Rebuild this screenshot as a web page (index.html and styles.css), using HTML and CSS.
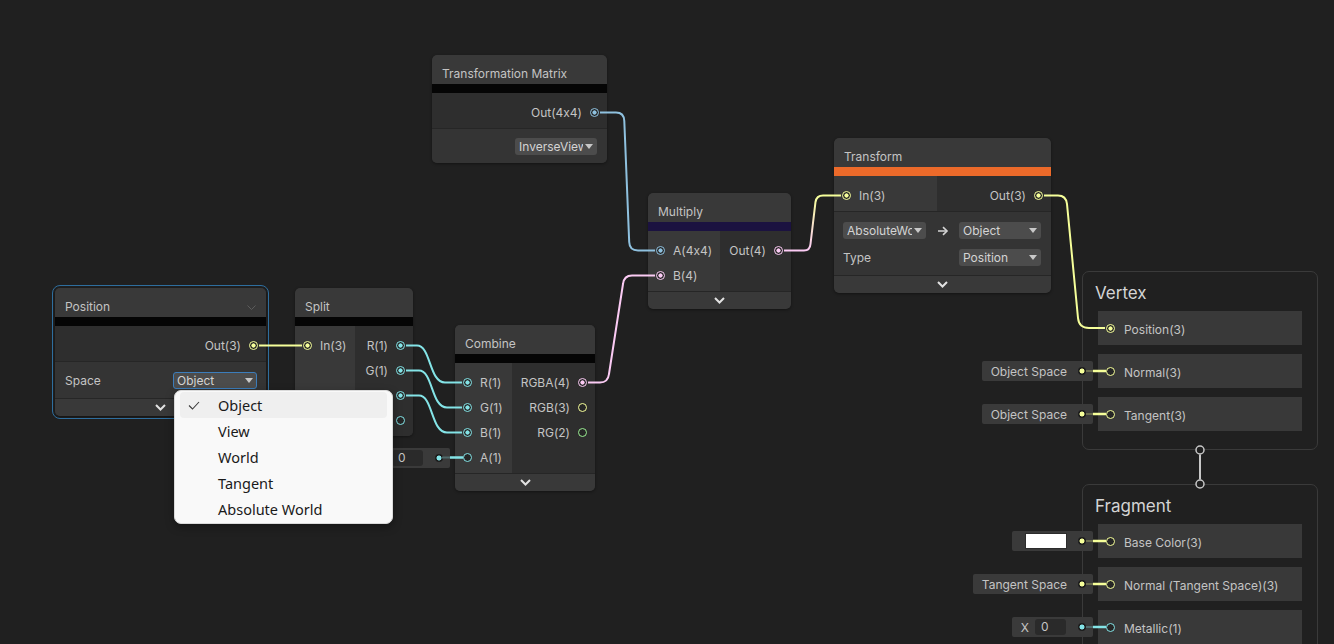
FILE: index.html
```html
<!DOCTYPE html>
<html lang="en">
<head>
  <meta charset="UTF-8">
  <meta name="viewport" content="width=device-width, initial-scale=1.0">
  <title>Shader Graph</title>
  <link rel="stylesheet" href="styles.css">
</head>
<body>
  <div class="graph">

    <!-- Transformation Matrix -->
    <div class="node n-matrix">
      <div class="node-title">Transformation Matrix</div>
      <div class="node-bar"></div>
      <div class="node-ports">
        <div class="ports-out">
          <div class="port out"><span>Out(4x4)</span><i class="dot mat on"></i></div>
        </div>
      </div>
      <div class="node-controls ctl-end">
        <div class="select sel-matrix"><span>InverseView</span></div>
      </div>
    </div>

    <!-- Multiply -->
    <div class="node n-multiply">
      <div class="node-title">Multiply</div>
      <div class="node-bar bar-purple"></div>
      <div class="node-ports">
        <div class="ports-in">
          <div class="port"><i class="dot mat on"></i><span>A(4x4)</span></div>
          <div class="port"><i class="dot v4 on"></i><span>B(4)</span></div>
        </div>
        <div class="ports-out">
          <div class="port out"><span>Out(4)</span><i class="dot v4 on"></i></div>
        </div>
      </div>
      <div class="node-collapse">
        <svg width="11" height="7" viewBox="0 0 11 7"><polyline points="1,1 5.5,5.5 10,1" fill="none" stroke="#e2e2e2" stroke-width="2"/></svg>
      </div>
    </div>

    <!-- Transform -->
    <div class="node n-transform">
      <div class="node-title">Transform</div>
      <div class="node-bar bar-orange"></div>
      <div class="node-ports">
        <div class="ports-in">
          <div class="port"><i class="dot v3 on"></i><span>In(3)</span></div>
        </div>
        <div class="ports-out">
          <div class="port out"><span>Out(3)</span><i class="dot v3 on"></i></div>
        </div>
      </div>
      <div class="node-controls ctl-grid">
        <div class="select"><span>AbsoluteWorld</span></div>
        <svg class="arrow" width="12" height="10" viewBox="0 0 12 10">
          <line x1="1" y1="5" x2="10" y2="5" stroke="#d4d4d4" stroke-width="1.6"/>
          <polyline points="6,1.2 10,5 6,8.8" fill="none" stroke="#d4d4d4" stroke-width="1.6"/>
        </svg>
        <div class="select"><span>Object</span></div>
        <span class="ctl-label">Type</span>
        <span></span>
        <div class="select"><span>Position</span></div>
      </div>
      <div class="node-collapse">
        <svg width="11" height="7" viewBox="0 0 11 7"><polyline points="1,1 5.5,5.5 10,1" fill="none" stroke="#e2e2e2" stroke-width="2"/></svg>
      </div>
    </div>

    <!-- Position -->
    <div class="node n-position selected">
      <div class="node-title">Position
        <svg width="9" height="5" viewBox="0 0 9 5"><polyline points="0.5,0.5 4.5,4.5 8.5,0.5" fill="none" stroke="#5c5c5c" stroke-width="1"/></svg>
      </div>
      <div class="node-bar"></div>
      <div class="node-ports">
        <div class="ports-out">
          <div class="port out"><span>Out(3)</span><i class="dot v3 on"></i></div>
        </div>
      </div>
      <div class="node-controls ctl-row">
        <span class="ctl-label">Space</span>
        <div class="select focus sel-space"><span>Object</span></div>
      </div>
      <div class="node-collapse">
        <svg width="11" height="7" viewBox="0 0 11 7"><polyline points="1,1 5.5,5.5 10,1" fill="none" stroke="#e2e2e2" stroke-width="2"/></svg>
      </div>
    </div>

    <!-- Split -->
    <div class="node n-split">
      <div class="node-title">Split</div>
      <div class="node-bar"></div>
      <div class="node-ports">
        <div class="ports-in">
          <div class="port"><i class="dot v3 on"></i><span>In(3)</span></div>
        </div>
        <div class="ports-out">
          <div class="port out"><span>R(1)</span><i class="dot v1 on"></i></div>
          <div class="port out"><span>G(1)</span><i class="dot v1 on"></i></div>
          <div class="port out"><span>B(1)</span><i class="dot v1 on"></i></div>
          <div class="port out"><span>A(1)</span><i class="dot v1"></i></div>
        </div>
      </div>
    </div>

    <!-- Combine -->
    <div class="node n-combine">
      <div class="node-title">Combine</div>
      <div class="node-bar"></div>
      <div class="node-ports">
        <div class="ports-in">
          <div class="port"><i class="dot v1 on"></i><span>R(1)</span></div>
          <div class="port"><i class="dot v1 on"></i><span>G(1)</span></div>
          <div class="port"><i class="dot v1 on"></i><span>B(1)</span></div>
          <div class="port">
            <div class="inline"><span class="inline-x">X</span><span class="field">0</span><i class="idot v1"></i></div>
            <i class="dot v1"></i><span>A(1)</span>
          </div>
        </div>
        <div class="ports-out">
          <div class="port out"><span>RGBA(4)</span><i class="dot v4 on"></i></div>
          <div class="port out"><span>RGB(3)</span><i class="dot v3"></i></div>
          <div class="port out"><span>RG(2)</span><i class="dot v2"></i></div>
        </div>
      </div>
      <div class="node-collapse">
        <svg width="11" height="7" viewBox="0 0 11 7"><polyline points="1,1 5.5,5.5 10,1" fill="none" stroke="#e2e2e2" stroke-width="2"/></svg>
      </div>
    </div>

    <!-- Vertex block -->
    <div class="block blk-vertex">
      <div class="block-title">Vertex</div>
      <div class="block-rows">
        <div class="slot"><i class="dot v3 on"></i><span>Position(3)</span></div>
        <div class="slot">
          <div class="inline"><span>Object Space</span><i class="idot v3"></i></div>
          <i class="dot v3"></i><span>Normal(3)</span>
        </div>
        <div class="slot">
          <div class="inline"><span>Object Space</span><i class="idot v3"></i></div>
          <i class="dot v3"></i><span>Tangent(3)</span>
        </div>
      </div>
    </div>

    <!-- Fragment block -->
    <div class="block blk-fragment">
      <div class="block-title">Fragment</div>
      <div class="block-rows">
        <div class="slot">
          <div class="inline inline-color"><span class="swatch"></span><i class="idot v3"></i></div>
          <i class="dot v3"></i><span>Base Color(3)</span>
        </div>
        <div class="slot">
          <div class="inline"><span>Tangent Space</span><i class="idot v3"></i></div>
          <i class="dot v3"></i><span>Normal (Tangent Space)(3)</span>
        </div>
        <div class="slot">
          <div class="inline"><span class="inline-x">X</span><span class="field">0</span><i class="idot v1"></i></div>
          <i class="dot v1"></i><span>Metallic(1)</span>
        </div>
      </div>
    </div>

    <!-- edges -->
    <svg class="wires" width="1334" height="644" viewBox="0 0 1334 644">
      <defs>
        <linearGradient id="mulToTf" gradientUnits="userSpaceOnUse" x1="0" y1="250" x2="0" y2="196">
          <stop offset="0" stop-color="#fbcbf4"/>
          <stop offset="1" stop-color="#f6ff9a"/>
        </linearGradient>
      </defs>
      <g fill="none" stroke-width="2">
        <path d="M600,112.5 H616 Q624,112.5 624.3,121 L629.2,242 Q629.5,250.5 638,250.5 H655" stroke="#8fc1df"/>
        <path d="M784,250.5 H804 Q810,250.5 810.5,244 L815.5,202 Q816.5,195.5 823,195.5 H841" stroke="url(#mulToTf)"/>
        <path d="M259,345.5 H302" stroke="#f6ff9a"/>
        <path d="M406,345.5 H417 C431,345.5 429,382.5 445,382.5 H462" stroke="#84e4e7"/>
        <path d="M406,370.5 H419 C433,370.5 431,407.5 447,407.5 H462" stroke="#84e4e7"/>
        <path d="M406,395.5 H419 C433,395.5 431,432.5 447,432.5 H462" stroke="#84e4e7"/>
        <path d="M588,382.5 H600 Q608,382.5 609,374 L623,284 Q624,275.5 632,275.5 H655" stroke="#fbcbf4"/>
        <path d="M1044,195.5 H1058 Q1066,195.5 1067,204 L1078,318 Q1079,328 1089,328 H1105" stroke="#f6ff9a"/>
      </g>
      <!-- inline value connectors -->
      <g fill="none">
        <path d="M442,457.5 H450" stroke="#4f6a6b" stroke-width="2"/>
        <path d="M450,457.5 H463" stroke="#84e4e7" stroke-width="2.5"/>
        <path d="M1086,371 H1093 M1086,414 H1093 M1086,541 H1093 M1086,584 H1093" stroke="#6a6c4f" stroke-width="2"/>
        <path d="M1093,371 H1106 M1093,414 H1106 M1093,541 H1106 M1093,584 H1106" stroke="#f6ff9a" stroke-width="2.5"/>
        <path d="M1086,627 H1093" stroke="#4f6a6b" stroke-width="2"/>
        <path d="M1093,627 H1106" stroke="#84e4e7" stroke-width="2.5"/>
      </g>
      <!-- vertex to fragment -->
      <line x1="1200" y1="454.5" x2="1200" y2="479.5" stroke="#c8c8c8" stroke-width="2"/>
      <circle cx="1200" cy="450" r="4" fill="#202020" stroke="#c8c8c8" stroke-width="1.5"/>
      <circle cx="1200" cy="484" r="4" fill="#202020" stroke="#c8c8c8" stroke-width="1.5"/>
    </svg>

    <!-- open dropdown for Position > Space -->
    <div class="menu">
      <div class="menu-item active">
        <svg class="check" width="12" height="9" viewBox="0 0 12 9"><polyline points="1,4.5 4.5,8 11,1" fill="none" stroke="#3c3c3c" stroke-width="1.1"/></svg>
        Object
      </div>
      <div class="menu-item">View</div>
      <div class="menu-item">World</div>
      <div class="menu-item">Tangent</div>
      <div class="menu-item">Absolute World</div>
    </div>

  </div>
</body>
</html>
```

FILE: styles.css
```css
body {
  margin: 0;
  background-color: #202020;
  font-family: Inter, "Noto Sans", sans-serif;
  font-feature-settings: "calt" 0;
  overflow: hidden;
}
.graph {
  position: relative;
  width: 1334px;
  height: 644px;
  overflow: hidden;
  background-color: #202020;
}

/* nodes */
.node {
  position: absolute;
  background-color: #2e2e2e;
  border-radius: 5px;
  overflow: hidden;
  box-shadow: 0 1px 3px rgba(0, 0, 0, 0.4);
}
.node.selected {
  overflow: visible;
  outline: 1px solid #2e6e9e;
  outline-offset: 2px;
}
.n-matrix { left: 432px; top: 55px; width: 175px; }
.n-multiply { left: 648px; top: 193px; width: 143px; }
.n-transform { left: 834px; top: 138px; width: 217px; }
.n-position { left: 55px; top: 288px; width: 211px; }
.n-split { left: 295px; top: 288px; width: 118px; }
.n-combine { left: 455px; top: 325px; width: 140px; overflow: visible; }

.node-title {
  height: 29px;
  box-sizing: border-box;
  padding: 9px 10px 0;
  background-color: #393939;
  color: #c4c4c4;
  font-size: 12px;
  line-height: 20px;
  display: flex;
  align-items: center;
  justify-content: space-between;
  border-radius: 5px 5px 0 0;
}
.node-bar {
  height: 9px;
  background-color: #050505;
}
.bar-purple { background-color: #1b1240; }
.bar-orange { background-color: #ec6a2a; }

.node-ports {
  display: flex;
}
.ports-in {
  background-color: #393939;
  padding: 7px 0 3px;
}
.ports-out {
  flex: 1;
  background-color: #2e2e2e;
  padding: 7px 0 3px;
}
.n-multiply .ports-in { width: 72px; }
.n-transform .ports-in { width: 103px; }
.n-split .ports-in { width: 60px; }
.n-combine .ports-in { width: 57px; }

.port {
  position: relative;
  height: 25px;
  padding: 0 8px;
  display: flex;
  align-items: center;
  gap: 8px;
  font-size: 12px;
  color: #c4c4c4;
  white-space: nowrap;
}
.port.out {
  justify-content: flex-end;
}

.dot {
  flex: none;
  width: 9px;
  height: 9px;
  box-sizing: border-box;
  border-radius: 50%;
  border: 1.5px solid var(--pc);
  background-color: #262626;
}
.dot.on {
  background: radial-gradient(circle, var(--pc) 0 1.8px, #262626 2.4px);
}
.v1 { --pc: #84e4e7; }
.v2 { --pc: #9aef92; }
.v3 { --pc: #f6ff9a; }
.v4 { --pc: #fbcbf4; }
.mat { --pc: #8fc1df; }

/* controls */
.node-controls {
  border-top: 1px solid #262626;
  background-color: #343434;
}
.ctl-end {
  height: 34px;
  padding: 0 10px;
  display: flex;
  align-items: center;
  justify-content: flex-end;
}
.ctl-row {
  height: 36px;
  padding: 0 9px 0 10px;
  display: flex;
  align-items: center;
  justify-content: space-between;
}
.ctl-grid {
  padding: 10px 10px 9px 9px;
  display: grid;
  grid-template-columns: 83px 1fr 82px;
  row-gap: 10px;
  align-items: center;
}
.ctl-grid .arrow {
  justify-self: center;
}
.ctl-label {
  font-size: 12px;
  color: #c4c4c4;
}

.select {
  height: 17px;
  box-sizing: border-box;
  padding: 0 4px;
  border-radius: 3px;
  background-color: #4c4c4c;
  color: #d4d4d4;
  font-size: 12px;
  display: flex;
  align-items: center;
  gap: 2px;
}
.select span {
  flex: 1;
  overflow: hidden;
  white-space: nowrap;
}
.select::after {
  content: "";
  flex: none;
  width: 0;
  height: 0;
  border-left: 4px solid transparent;
  border-right: 4px solid transparent;
  border-top: 5px solid #c8c8c8;
}
.select.focus {
  border: 1px solid #3c7dbb;
  padding: 0 3px;
}
.sel-matrix { width: 82px; }
.sel-space { width: 84px; }

.node-collapse {
  height: 17px;
  border-top: 1px solid #262626;
  background-color: #393939;
  display: flex;
  align-items: center;
  justify-content: center;
  border-radius: 0 0 5px 5px;
}

/* inline values */
.inline {
  position: absolute;
  right: calc(100% + 5px);
  top: calc(50% - 10px);
  height: 20px;
  padding: 0 7px 0 9px;
  box-sizing: border-box;
  display: flex;
  align-items: center;
  gap: 11px;
  background-color: #3a3a3a;
  border-radius: 2px;
  color: #c4c4c4;
  font-size: 12px;
  white-space: nowrap;
}
.inline-x {
  margin-right: -5px;
}
.field {
  width: 31px;
  height: 16px;
  box-sizing: border-box;
  padding-left: 6px;
  background-color: #2a2a2a;
  border-radius: 3px;
  line-height: 16px;
  margin-right: 1px;
}
.inline-color {
  padding-left: 13px;
}
.swatch {
  width: 42px;
  height: 16px;
  box-sizing: border-box;
  background-color: #ffffff;
  border: 1px solid #2c2c2c;
}
.idot {
  flex: none;
  width: 8px;
  height: 8px;
  border-radius: 50%;
  background: radial-gradient(circle, var(--pc) 0 2.2px, #1c1c1c 2.8px);
}

/* master stack blocks */
.block {
  position: absolute;
  box-sizing: border-box;
  padding: 0 15px 18px;
  border: 1px solid #3a3a3a;
  border-radius: 7px;
}
.blk-vertex { left: 1082px; top: 271px; width: 236px; }
.blk-fragment { left: 1082px; top: 484px; width: 236px; }
.block-title {
  height: 39px;
  box-sizing: border-box;
  padding-top: 10px;
  margin-left: -3px;
  font-size: 17px;
  line-height: 22px;
  color: #d4d4d4;
}
.block-rows {
  display: flex;
  flex-direction: column;
  gap: 9px;
}
.slot {
  position: relative;
  height: 34px;
  padding: 2px 8px 0;
  box-sizing: border-box;
  display: flex;
  align-items: center;
  gap: 9px;
  background-color: #393939;
  color: #c4c4c4;
  font-size: 12px;
  white-space: nowrap;
}
.slot .dot {
  margin-top: -2px;
}

/* wires layer */
.wires {
  position: absolute;
  left: 0;
  top: 0;
  z-index: 2;
  pointer-events: none;
}

/* dropdown menu */
.menu {
  position: absolute;
  left: 174px;
  top: 390px;
  width: 219px;
  box-sizing: border-box;
  padding: 1px 5px;
  background-color: #f9f9f9;
  border: 1px solid #dadada;
  border-radius: 7px;
  box-shadow: 0 3px 8px rgba(0, 0, 0, 0.35);
  z-index: 3;
}
.menu-item {
  position: relative;
  height: 26px;
  padding-left: 38px;
  display: flex;
  align-items: center;
  border-radius: 4px;
  font-family: "Noto Sans", sans-serif;
  font-size: 14.5px;
  color: #1a1a1a;
}
.menu-item.active {
  background-color: #efefef;
}
.check {
  position: absolute;
  left: 8px;
  top: 9px;
}
```
